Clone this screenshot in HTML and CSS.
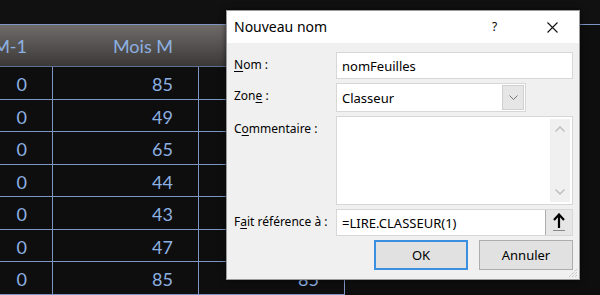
FILE: index.html
```html
<!DOCTYPE html>
<html lang="fr">
<head>
  <meta charset="UTF-8" />
  <title>Nouveau nom</title>
  <link rel="stylesheet" href="styles.css">
</head>
<body>
  <div class="sheet">
    <div class="table">
      <div class="head">M-1</div>
      <div class="head">Mois M</div>
      <div class="head"></div>

      <div class="cell">0</div><div class="cell">85</div><div class="cell"></div>
      <div class="cell">0</div><div class="cell">49</div><div class="cell"></div>
      <div class="cell">0</div><div class="cell">65</div><div class="cell"></div>
      <div class="cell">0</div><div class="cell">44</div><div class="cell"></div>
      <div class="cell">0</div><div class="cell">43</div><div class="cell"></div>
      <div class="cell">0</div><div class="cell">47</div><div class="cell"></div>
      <div class="cell">0</div><div class="cell">85</div><div class="cell">85</div>
    </div>
  </div>

  <div class="dialog">
    <div class="title-bar">
      <span class="title">Nouveau nom</span>
      <span class="help">?</span>
      <span class="close">
        <svg width="11" height="11" viewBox="0 0 11 11"><path d="M0.5 0.5 L10.5 10.5 M10.5 0.5 L0.5 10.5" stroke="#111" stroke-width="1.1" fill="none"/></svg>
      </span>
    </div>

    <div class="dialog-body">
      <label class="lbl"><u>N</u>om :</label>
      <div class="field text-field">nomFeuilles</div>

      <label class="lbl">Zon<u>e</u> :</label>
      <div class="select">
        <span class="select-value">Classeur</span>
        <span class="select-btn">
          <svg width="9" height="5" viewBox="0 0 9 5"><path d="M0.5 0.5 L4.5 4.5 L8.5 0.5" stroke="#777" stroke-width="1" fill="none"/></svg>
        </span>
      </div>

      <label class="lbl">C<u>o</u>mmentaire :</label>
      <div class="field memo">
        <div class="scrollbar">
          <svg width="10" height="6" viewBox="0 0 10 6"><path d="M0.5 5.5 L5 1 L9.5 5.5" stroke="#bdbdbd" stroke-width="1.4" fill="none"/></svg>
          <svg width="10" height="6" viewBox="0 0 10 6"><path d="M0.5 0.5 L5 5 L9.5 0.5" stroke="#bdbdbd" stroke-width="1.4" fill="none"/></svg>
        </div>
      </div>

      <label class="lbl">F<u>a</u>it référence à :</label>
      <div class="field ref-field">
        <span class="ref-value">=LIRE.CLASSEUR(1)</span>
        <span class="ref-btn">
          <svg width="14" height="19" viewBox="0 0 14 19"><path d="M7 2 L7 15 M2 7 L7 1.5 L12 7" stroke="#000" stroke-width="2.2" fill="none"/><path d="M1 17.5 L13 17.5" stroke="#888" stroke-width="1"/></svg>
        </span>
      </div>

      <div class="buttons">
        <button class="btn btn-ok">OK</button>
        <button class="btn">Annuler</button>
      </div>
    </div>

    <svg class="grip" width="11" height="11" viewBox="0 0 11 11">
      <path d="M10 2 L2 10 M10 5 L5 10 M10 8 L8 10" stroke="#b4b4b4" stroke-width="1" stroke-dasharray="1 1" fill="none"/>
    </svg>
  </div>
</body>
</html>
```

FILE: styles.css
```css
body {
  margin: 0;
  background: #0e0e0e;
  height: 295px;
  overflow: hidden;
  position: relative;
  font-family: 'Noto Sans', 'Open Sans', sans-serif;
}

.sheet {
  padding-top: 24px;
  background: #111;
}

.table {
  display: grid;
  grid-template-columns: 53px 146px 146px;
  grid-auto-rows: 32.5px;
  grid-template-rows: 42px;
  border-top: 1px solid #7d96c4;
  font-family: 'Lato', sans-serif;
  font-size: 18px;
  color: #8db0e2;
  background: #0e0e0e;
}

.head,
.cell {
  display: flex;
  justify-content: flex-end;
  white-space: nowrap;
  box-sizing: border-box;
}

.head {
  background: linear-gradient(#6e6b69, #3b3937);
  padding: 0 26px 0 0;
  line-height: 42px;
  height: 42px;
  border-bottom: 1px solid #5d6f92;
}

.cell {
  padding: 2px 25px 0 0;
  line-height: 31px;
  border-right: 1px solid #7d96c4;
  border-bottom: 1px solid #7d96c4;
}

.dialog {
  position: absolute;
  left: 226px;
  top: 10px;
  width: 354px;
  height: 270px;
  box-sizing: border-box;
  border: 1px solid #9a9a9a;
  background: #f0f0f0;
  box-shadow: 0 0 6px rgba(0, 0, 0, 0.6);
  color: #000;
}

.title-bar {
  height: 32px;
  background: #fff;
  display: flex;
  align-items: center;
  padding-left: 7px;
}

.title {
  font-size: 14px;
  flex: 1;
  margin-top: -1px;
}

.help {
  font-size: 12px;
  width: 55px;
  margin-top: -1px;
}

.close {
  width: 32px;
  display: flex;
  margin-top: 1px;
}

.dialog-body {
  display: grid;
  grid-template-columns: 102px 237px;
  grid-template-rows: 27px 29px 89px 27px 30px;
  row-gap: 4px;
  padding: 9px 0 0 7px;
}

.lbl {
  font-size: 12px;
  padding-top: 4px;
}

.lbl u {
  text-decoration-thickness: 1px;
  text-underline-offset: 2px;
}

.field {
  background: #fff;
  border: 1px solid #d7d7d7;
  box-sizing: border-box;
  font-size: 13px;
}

.text-field {
  padding: 4px 0 0 5px;
}

.select {
  width: 190px;
  background: #fff;
  border: 1px solid #d7d7d7;
  box-sizing: border-box;
  display: flex;
  font-size: 13px;
}

.select-value {
  flex: 1;
  padding: 5px 0 0 5px;
}

.select-btn {
  width: 20px;
  margin: 1px;
  background: #e6e6e6;
  border: 1px solid #d0d0d0;
  display: flex;
  align-items: center;
  justify-content: center;
}

.memo {
  display: flex;
  justify-content: flex-end;
  padding: 2px;
}

.scrollbar {
  width: 20px;
  background: #f0f0f0;
  display: flex;
  flex-direction: column;
  justify-content: space-between;
  align-items: center;
  padding: 7px 0;
}

.ref-field {
  display: flex;
}

.ref-value {
  flex: 1;
  padding: 4px 0 0 5px;
}

.ref-btn {
  width: 26px;
  background: #e6e6e6;
  border-left: 1px solid #adadad;
  display: flex;
  align-items: center;
  justify-content: center;
}

.buttons {
  grid-column: 1 / 3;
  display: flex;
  justify-content: flex-end;
  gap: 11px;
}

.btn {
  width: 94px;
  font-family: 'Noto Sans', 'Open Sans', sans-serif;
  font-size: 13px;
  background: #e1e1e1;
  border: 1px solid #adadad;
  padding: 0;
  color: #000;
}

.btn-ok {
  border: 2px solid #3b8fe0;
}

.grip {
  position: absolute;
  right: 1px;
  bottom: 1px;
}
```
